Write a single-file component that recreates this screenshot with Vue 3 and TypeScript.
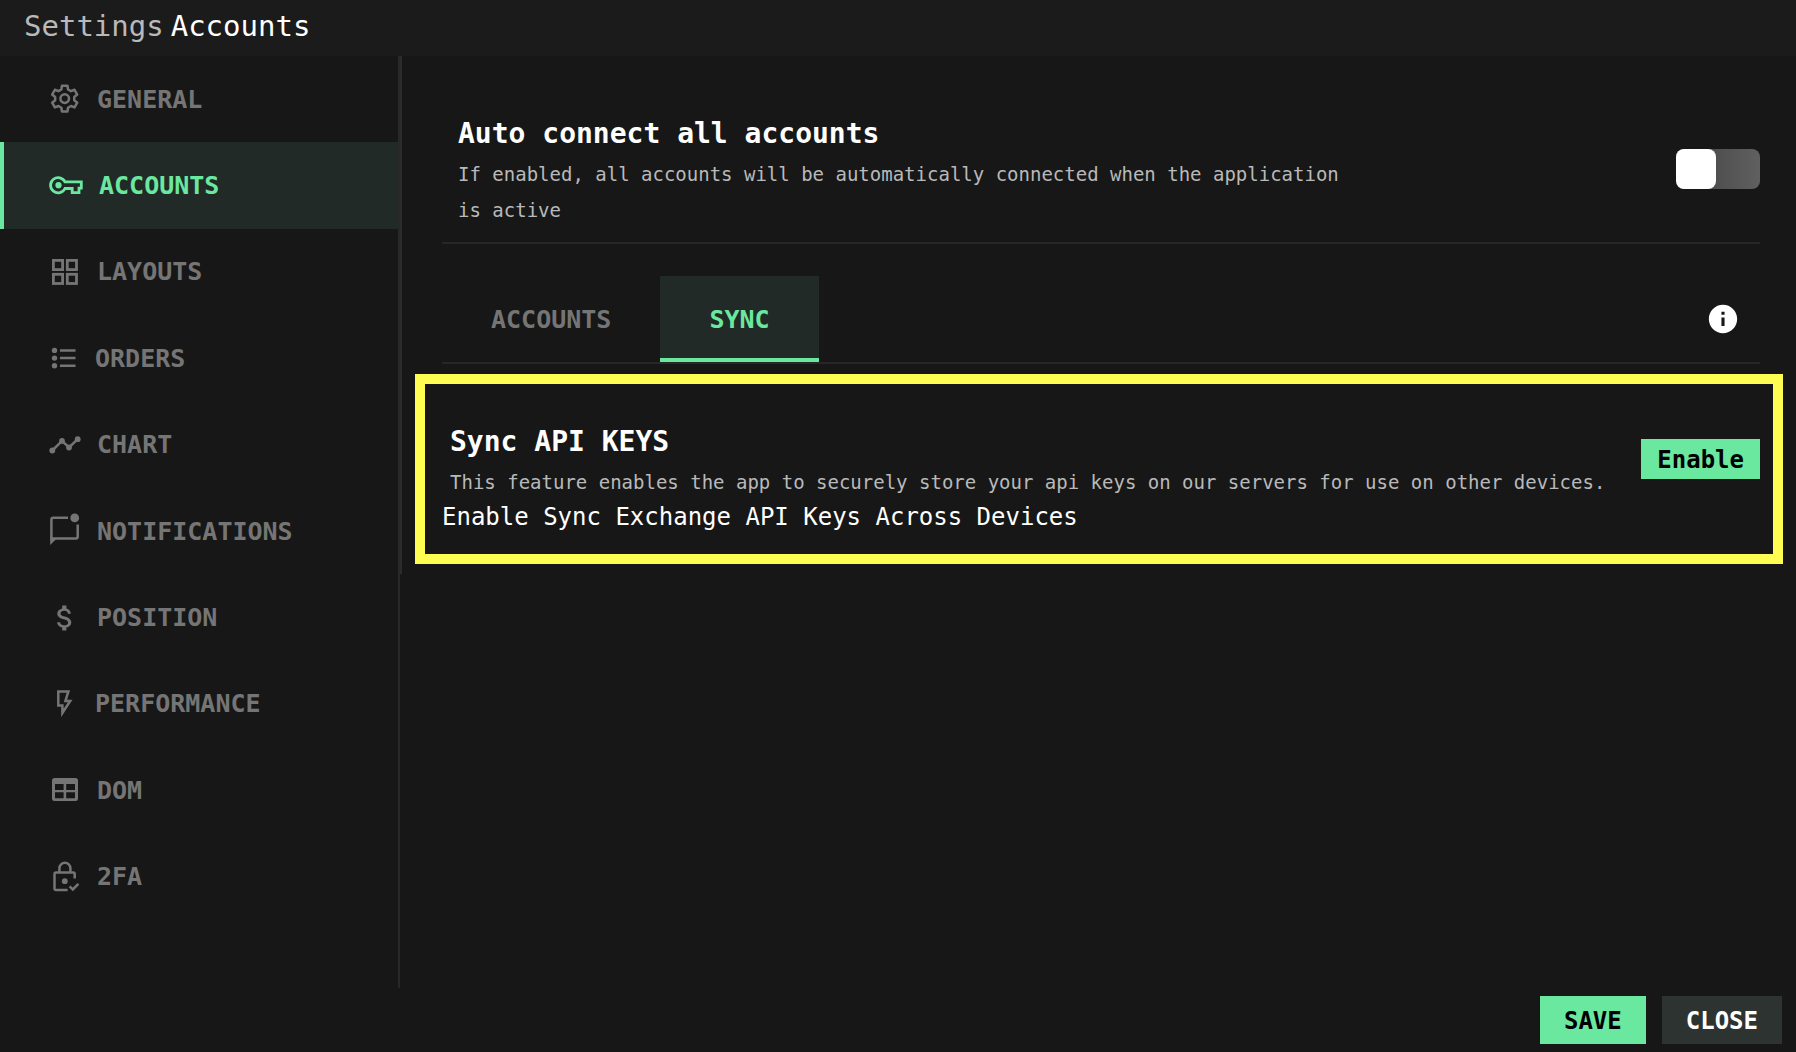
<script setup lang="ts">
import { ref } from 'vue'

interface NavItem {
  id: string
  label: string
  iconWidth: number
}

const items: NavItem[] = [
  { id: 'general', label: 'GENERAL', iconWidth: 32 },
  { id: 'accounts', label: 'ACCOUNTS', iconWidth: 34 },
  { id: 'layouts', label: 'LAYOUTS', iconWidth: 32 },
  { id: 'orders', label: 'ORDERS', iconWidth: 30 },
  { id: 'chart', label: 'CHART', iconWidth: 32 },
  { id: 'notifications', label: 'NOTIFICATIONS', iconWidth: 32 },
  { id: 'position', label: 'POSITION', iconWidth: 32 },
  { id: 'performance', label: 'PERFORMANCE', iconWidth: 30 },
  { id: 'dom', label: 'DOM', iconWidth: 32 },
  { id: '2fa', label: '2FA', iconWidth: 32 },
]

const tabs = ['ACCOUNTS', 'SYNC']
const activeItem = ref('accounts')
const activeTab = ref('SYNC')
const autoConnect = ref(false)

// Outline of a six-toothed cog, centred on the origin: [angle, radius] per tooth.
const tooth = [
  [-20, 9.7],
  [-12, 13.2],
  [12, 13.2],
  [20, 9.7],
]
const gearPoints = [0, 60, 120, 180, 240, 300]
  .flatMap((turn) =>
    tooth.map(([angle, radius]) => {
      const a = ((turn + angle) * Math.PI) / 180
      return `${(Math.sin(a) * radius).toFixed(2)},${(-Math.cos(a) * radius).toFixed(2)}`
    }),
  )
  .join(' ')
</script>

<template>
  <div class="window">
    <header class="titlebar">
      <span class="crumb">Settings</span>
      <h1>Accounts</h1>
    </header>

    <div class="body">
      <nav class="sidebar" aria-label="Settings">
        <ul>
          <li v-for="item in items" :key="item.id">
            <a
              :href="'#' + item.id"
              :class="{ active: item.id === activeItem }"
              @click.prevent="activeItem = item.id"
            >
              <svg
                :width="item.iconWidth"
                height="32"
                :viewBox="`0 0 ${item.iconWidth} 32`"
                aria-hidden="true"
              >
                <g v-if="item.id === 'general'" class="line" transform="translate(15.7 15.6)">
                  <polygon :points="gearPoints" stroke-linejoin="round" />
                  <circle r="4.300" />
                </g>
                <g v-else-if="item.id === 'accounts'">
                  <path
                    class="line thick"
                    d="M16 11.9A7.600 7.600 0 1 0 16 18.500H23.200V22.700H30V18.200H32.300V11.900Z"
                  />
                  <circle class="solid" cx="9.500" cy="15.200" r="3.100" />
                </g>
                <g v-else-if="item.id === 'layouts'" class="line thick">
                  <rect x="4.400" y="4.400" width="9.200" height="9.200" />
                  <rect x="18.300" y="4.400" width="9.200" height="9.200" />
                  <rect x="4.400" y="18.300" width="9.200" height="9.200" />
                  <rect x="18.300" y="18.300" width="9.200" height="9.200" />
                </g>
                <g v-else-if="item.id === 'orders'">
                  <path class="line" d="M11 8.400H26.500M11 16.100H26.500M11 23.800H26.500" />
                  <g class="solid">
                    <circle cx="5.500" cy="8.400" r="2.700" />
                    <circle cx="5.500" cy="16.100" r="2.700" />
                    <circle cx="5.500" cy="23.800" r="2.700" />
                  </g>
                </g>
                <g v-else-if="item.id === 'chart'">
                  <path class="line" d="M3.300 21.500 13 11.900 20 18.500 28.700 10.200" />
                  <g class="solid">
                    <circle cx="3.300" cy="21.500" r="2.900" />
                    <circle cx="13" cy="11.900" r="2.900" />
                    <circle cx="20" cy="18.500" r="2.900" />
                    <circle cx="28.700" cy="10.200" r="2.900" />
                  </g>
                </g>
                <g v-else-if="item.id === 'notifications'">
                  <path class="line" d="M19 2.800H4.400Q2.400 2.800 2.400 4.800V23.600H26.800Q28.700 23.600 28.700 21.600V9.400" />
                  <path class="solid" d="M1.200 22V30L7.200 24Z" />
                  <circle class="solid" cx="25.700" cy="2.900" r="4.400" />
                </g>
                <g v-else-if="item.id === 'position'" transform="translate(-0.8 -0.8) scale(1.4)" class="solid">
                  <path
                    d="M11.8 10.9c-2.27-.59-3-1.2-3-2.15 0-1.09 1.01-1.85 2.7-1.85 1.78 0 2.44.85 2.5 2.1h2.21c-.07-1.72-1.12-3.3-3.21-3.81V3h-3v2.16c-1.94.42-3.5 1.68-3.5 3.61 0 2.31 1.91 3.46 4.7 4.13 2.5.6 3 1.48 3 2.41 0 .69-.49 1.79-2.7 1.79-2.06 0-2.87-.92-2.98-2.1h-2.2c.12 2.19 1.76 3.42 3.68 3.83V21h3v-2.15c1.95-.37 3.5-1.5 3.5-3.55 0-2.84-2.43-3.81-4.7-4.4z"
                  />
                </g>
                <path
                  v-else-if="item.id === 'performance'"
                  class="line"
                  d="M9.300 3.400H19.400L16.400 13H21.200L13.400 25V17.600H9.300Z"
                />
                <path
                  v-else-if="item.id === 'dom'"
                  class="solid"
                  fill-rule="evenodd"
                  d="M5.500 4.100H26.500Q29 4.100 29 6.600V24.600Q29 27.100 26.500 27.100H5.500Q3 27.100 3 24.600V6.600Q3 4.100 5.500 4.100ZM6 10.100V15.900H14.600V10.100ZM17.200 10.100V15.900H26V10.100ZM6 18.300V24.300H14.600V18.300ZM17.200 18.300V24.300H26V18.300Z"
                />
                <g v-else class="line">
                  <path
                    d="M18.600 28.900H7Q5.500 28.900 5.500 27.400V13Q5.500 11.500 7 11.500H24.200Q25.700 11.500 25.700 13V17.600M10.400 11.500V7.200A5.500 5.500 0 0 1 21.400 7.200V11.500"
                  />
                  <path d="M20.600 25.400 23.800 28.500 29.400 22.800" />
                  <circle class="dot" cx="15.800" cy="20.200" r="2.900" />
                </g>
              </svg>
              <span>{{ item.label }}</span>
            </a>
          </li>
        </ul>
      </nav>

      <main class="content">
        <section class="inset">
          <div class="setting auto">
            <div>
              <h2 id="auto-title">Auto connect all accounts</h2>
              <p id="auto-desc">
                If enabled, all accounts will be automatically connected when the application is active
              </p>
            </div>
            <input
              v-model="autoConnect"
              class="toggle"
              type="checkbox"
              role="switch"
              aria-labelledby="auto-title"
              aria-describedby="auto-desc"
            />
          </div>

          <div class="tabrow">
            <div class="tabs" role="tablist">
              <button
                v-for="tab in tabs"
                :key="tab"
                type="button"
                role="tab"
                class="tab"
                :class="{ active: tab === activeTab }"
                :aria-selected="tab === activeTab"
                @click="activeTab = tab"
              >
                {{ tab }}
              </button>
            </div>
            <button type="button" class="info" aria-label="More information">
              <svg width="34" height="34" viewBox="0 0 24 24" aria-hidden="true">
                <path
                  class="solid"
                  d="M12 2C6.48 2 2 6.48 2 12s4.48 10 10 10 10-4.48 10-10S17.52 2 12 2zm1.1 15h-2.2v-6h2.2v6zm0-8h-2.2V6.9h2.2V9z"
                />
              </svg>
            </button>
          </div>
        </section>

        <section class="highlight">
          <div class="setting sync">
            <div>
              <h2>Sync API KEYS</h2>
              <p>
                This feature enables the app to securely store your api keys on our servers for use on other devices.
              </p>
            </div>
            <button type="button" class="btn primary small">Enable</button>
          </div>
          <p class="note">Enable Sync Exchange API Keys Across Devices</p>
        </section>
      </main>
    </div>

    <footer class="actions">
      <button type="button" class="btn primary">SAVE</button>
      <button type="button" class="btn">CLOSE</button>
    </footer>
  </div>
</template>

<style>
body {
  margin: 0;
  background: #171717;
}
</style>

<style scoped>
.window {
  display: flex;
  flex-direction: column;
  min-height: 100vh;
  background: #171717;
  color: #fff;
  font-family: 'DejaVu Sans Mono', 'Liberation Mono', monospace;
}

h1,
h2,
p,
ul {
  margin: 0;
  padding: 0;
}

button {
  border: 0;
  padding: 0;
  border-radius: 0;
  background: none;
  color: inherit;
  font-family: inherit;
  cursor: pointer;
}

.titlebar {
  display: flex;
  gap: 7px;
  padding: 0 24px 4px;
  background: #1b1b1b;
  font-size: 29px;
  line-height: 52px;
}

.crumb {
  color: #b9b9b9;
}

h1 {
  font-size: inherit;
  font-weight: 400;
}

.body {
  display: flex;
  flex: 1;
  align-items: flex-start;
}

.sidebar {
  align-self: stretch;
  flex: none;
  box-sizing: border-box;
  width: 400px;
  border-right: 2px solid #282828;
}

.sidebar ul {
  display: grid;
  grid-auto-rows: 1fr;
  min-height: 864px;
  list-style: none;
}

.sidebar li {
  display: grid;
}

.sidebar a {
  display: flex;
  align-items: center;
  gap: 16px;
  padding-left: 45px;
  border-left: 4px solid transparent;
  color: #757575;
  font-size: 25px;
  font-weight: 700;
  text-decoration: none;
}

.sidebar a.active {
  border-left-color: #6be8a0;
  background: #212a26;
  color: #6be8a0;
}

svg {
  display: block;
  flex: none;
  overflow: visible;
}

.solid {
  fill: currentColor;
}

.line {
  fill: none;
  stroke: currentColor;
  stroke-width: 2.5;
}

.thick {
  stroke-width: 2.8;
}

.dot {
  fill: currentColor;
  stroke: none;
}

.content {
  flex: 1;
  min-width: 0;
  padding: 54px 13px 10px;
  border-left: 2px solid #2c2c2c;
}

.inset {
  padding: 0 23px 0 27px;
}

.setting {
  display: flex;
  align-items: center;
  justify-content: space-between;
}

.auto {
  padding: 0 0 14px 16px;
  border-bottom: 2px solid #272727;
}

.auto p {
  max-width: 900px;
}

.setting h2 {
  padding-top: 2px;
  font-size: 28px;
  line-height: 44px;
}

.setting p {
  color: #b9b9b9;
  font-size: 19px;
  line-height: 36px;
}

.toggle {
  appearance: none;
  flex: none;
  width: 84px;
  height: 40px;
  margin: 0;
  border-radius: 8px;
  background: linear-gradient(90deg, #404040, #606060);
  cursor: pointer;
}

.toggle::before {
  content: '';
  display: block;
  width: 40px;
  height: 40px;
  border-radius: 8px;
  background: #fff;
}

.toggle:checked::before {
  margin-left: auto;
}

.tabrow {
  display: flex;
  align-items: center;
  justify-content: space-between;
  margin-top: 32px;
  padding-right: 20px;
  border-bottom: 2px solid #272727;
}

.tabs {
  display: flex;
}

.tab {
  padding: 6px 49px 0;
  border-bottom: 4px solid transparent;
  color: #757575;
  font-size: 25px;
  font-weight: 700;
  line-height: 76px;
}

.tab.active {
  border-bottom-color: #6be8a0;
  background: #212a26;
  color: #6be8a0;
}

.highlight {
  margin-top: 10px;
  padding: 34px 13px 20px 17px;
  border: 10px solid #fffc52;
}

.sync {
  padding-left: 8px;
}

.note {
  font-size: 24px;
  line-height: 34px;
}

.btn {
  flex: none;
  padding: 2px 24px 0;
  background: #2d3331;
  color: #fff;
  font-size: 24px;
  font-weight: 700;
  line-height: 46px;
}

.btn.primary {
  background: #6be8a0;
  color: #000;
}

.btn.small {
  padding: 2px 16px 0;
  line-height: 38px;
}

.actions {
  display: flex;
  justify-content: flex-end;
  gap: 16px;
  padding: 8px 14px;
}
</style>
